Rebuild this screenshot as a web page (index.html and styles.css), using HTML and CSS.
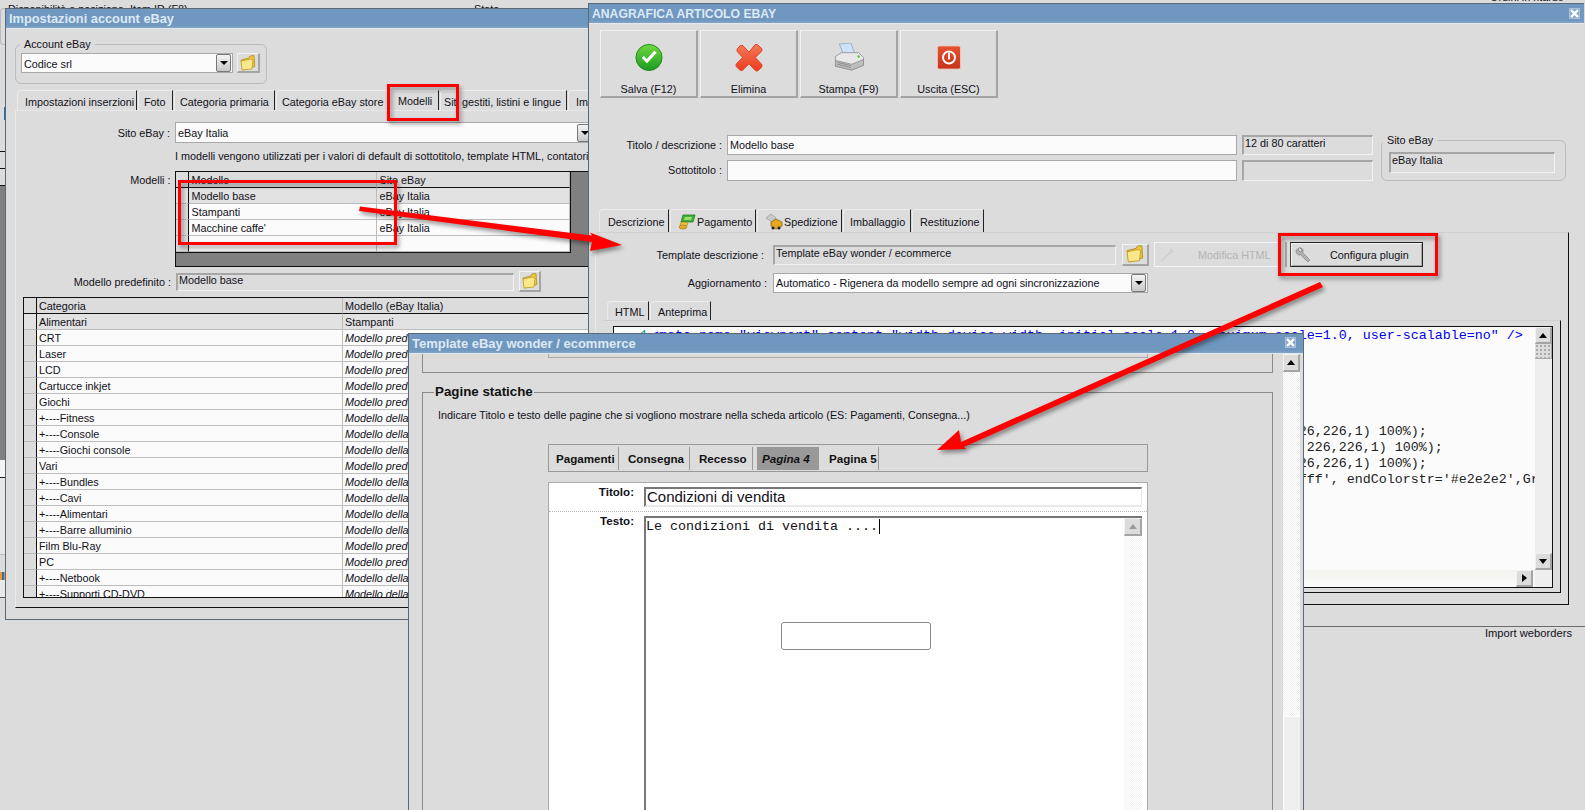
FILE: index.html
```html
<!DOCTYPE html>
<html lang="it">
<head>
<meta charset="utf-8">
<title>Impostazioni account eBay</title>
<link rel="stylesheet" href="styles.css">
</head>
<body>
<div class="page">

  <!-- application behind the windows -->
  <div class="behind-top"><span class="bt-a">Disponibilità e posizione</span><span class="bt-b">Item ID (F8)</span><span class="bt-c">Stato</span></div>
  <div class="behind-right">Ordini in ritardo</div>
  <div class="behind-left">
    <div class="bl bl-a"></div>
    <div class="bl bl-b"></div>
    <div class="bl bl-c"></div>
    <div class="bl bl-d"></div>
    <div class="bl bl-e"></div>
    <div class="bl bl-f"></div>
    <div class="bl bl-g"></div>
    <div class="bl bl-h"></div>
    <div class="bl bl-i"></div>
    <div class="bl bl-j"></div>
  </div>
  <div class="statusbar">Import weborders</div>

  <!-- Window 1 -->
  <section class="win win1">
    <header class="title">Impostazioni account eBay</header>
    <div class="win1-body">
      <fieldset class="group group-account">
        <legend>Account eBay</legend>
        <div class="row-tight">
          <div class="select sel-account"><span>Codice srl</span><i class="drop"></i></div>
          <button class="folder fb-account"><svg width="16" height="16" viewBox="0 0 16 16"><use href="#ico-folder"/></svg></button>
        </div>
      </fieldset>
      <nav class="tabs tabs1">
        <span class="tab t1a">Impostazioni inserzioni</span>
        <span class="tab t1b">Foto</span>
        <span class="tab t1c">Categoria primaria</span>
        <span class="tab t1d">Categoria eBay store</span>
        <span class="tab on t1e">Modelli</span>
        <span class="tab t1f">Siti gestiti, listini e lingue</span>
        <span class="tab t1g">Importazione</span>
      </nav>
      <div class="panel1">
        <div class="frow fr-site">
          <label class="lab">Sito eBay :</label>
          <div class="select sel-site"><span>eBay Italia</span><i class="drop"></i></div>
        </div>
        <p class="info">I modelli vengono utilizzati per i valori di default di sottotitolo, template HTML, contatori e altri parametri</p>
        <div class="frow fr-models">
          <label class="lab lab-top">Modelli :</label>
          <div class="gridbox models">
            <table class="tbl tbl-models">
              <tr class="head"><td class="ind"></td><td class="c-m">Modello</td><td>Sito eBay</td></tr>
              <tr class="cur"><td class="ind"></td><td>Modello base</td><td>eBay Italia</td></tr>
              <tr><td class="ind"></td><td>Stampanti</td><td>eBay Italia</td></tr>
              <tr><td class="ind"></td><td>Macchine caffe'</td><td>eBay Italia</td></tr>
              <tr><td class="ind"></td><td></td><td></td></tr>
            </table>
          </div>
        </div>
        <div class="frow fr-pred">
          <label class="lab">Modello predefinito :</label>
          <div class="ro ro-pred">Modello base</div>
          <button class="folder fb-pred"><svg width="16" height="16" viewBox="0 0 16 16"><use href="#ico-folder"/></svg></button>
        </div>
        <div class="gridbox cats">
          <table class="tbl tbl-cats">
            <tr class="head"><td class="ind"></td><td class="c-c">Categoria</td><td>Modello (eBay Italia)</td></tr>
            <tr class="cur"><td class="ind"></td><td>Alimentari</td><td>Stampanti</td></tr>
            <tr><td class="ind"></td><td>CRT</td><td class="it">Modello predefinito</td></tr>
            <tr><td class="ind"></td><td>Laser</td><td class="it">Modello predefinito</td></tr>
            <tr><td class="ind"></td><td>LCD</td><td class="it">Modello predefinito</td></tr>
            <tr><td class="ind"></td><td>Cartucce inkjet</td><td class="it">Modello predefinito</td></tr>
            <tr><td class="ind"></td><td>Giochi</td><td class="it">Modello predefinito</td></tr>
            <tr><td class="ind"></td><td>+----Fitness</td><td class="it">Modello della categoria</td></tr>
            <tr><td class="ind"></td><td>+----Console</td><td class="it">Modello della categoria</td></tr>
            <tr><td class="ind"></td><td>+----Giochi console</td><td class="it">Modello della categoria</td></tr>
            <tr><td class="ind"></td><td>Vari</td><td class="it">Modello predefinito</td></tr>
            <tr><td class="ind"></td><td>+----Bundles</td><td class="it">Modello della categoria</td></tr>
            <tr><td class="ind"></td><td>+----Cavi</td><td class="it">Modello della categoria</td></tr>
            <tr><td class="ind"></td><td>+----Alimentari</td><td class="it">Modello della categoria</td></tr>
            <tr><td class="ind"></td><td>+----Barre alluminio</td><td class="it">Modello della categoria</td></tr>
            <tr><td class="ind"></td><td>Film Blu-Ray</td><td class="it">Modello predefinito</td></tr>
            <tr><td class="ind"></td><td>PC</td><td class="it">Modello predefinito</td></tr>
            <tr><td class="ind"></td><td>+----Netbook</td><td class="it">Modello della categoria</td></tr>
            <tr><td class="ind"></td><td>+----Supporti CD-DVD</td><td class="it">Modello della categoria</td></tr>
          </table>
        </div>
      </div>
    </div>
  </section>

  <!-- Window 2 -->
  <section class="win win2">
    <header class="title">ANAGRAFICA ARTICOLO EBAY<span class="close"><svg width="9" height="9" viewBox="0 0 9 9"><path d="M1 1l7 7M8 1l-7 7" stroke="#fff" stroke-width="2.4" fill="none"/></svg></span></header>
    <div class="win2-body">
      <div class="toolbar">
        <button class="tbtn">
          <svg width="30" height="30" viewBox="0 0 30 30"><circle cx="15" cy="15" r="13.5" fill="url(#g-green)" stroke="#1f8a1a"/><path d="M7.5 15.5l5.5 5.5 10-11-2.6-2-7.6 8.6-3.2-3.2z" fill="#fff"/></svg>
          <span>Salva (F12)</span>
        </button>
        <button class="tbtn">
          <svg width="30" height="30" viewBox="0 0 30 30"><path d="M6 2.500Q8 2 9 3l6 6.500L21 2q1-1 3 0l4 3.500q1 1.500 0 3L21.500 15l6.500 7q1 1.500 0 3l-3.500 3.500q-1.500 1-3 0L15 21.500 8.500 28q-1.500 1-3 0L2 24.500q-1-1.500 0-3L8.500 15 3 9q-1-1.500 0-3z" fill="url(#g-red)" stroke="#d8401f" stroke-linejoin="round"/></svg>
          <span>Elimina</span>
        </button>
        <button class="tbtn">
          <svg width="32" height="30" viewBox="0 0 32 30"><path d="M6 1l12-1 4 11H10z" fill="#cfe3f7" stroke="#8aa3bd" stroke-width=".8"/><path d="M2 14l6-4h18l5 5v8l-12 5-17-4z" fill="#e8e8e8" stroke="#9a9a9a"/><path d="M2 18l17 4 12-5v6l-12 5-17-4z" fill="#bdbdbd" stroke="#8c8c8c" stroke-width=".8"/><path d="M4 20l14 3.4M4 22l14 3.4" stroke="#777" stroke-width=".7"/><circle cx="26" cy="14" r="1.3" fill="#5cc04a"/></svg>
          <span>Stampa (F9)</span>
        </button>
        <button class="tbtn">
          <svg width="30" height="30" viewBox="0 0 30 30"><rect x="3" y="3" width="24" height="24" rx="2" fill="url(#g-pow)" stroke="#f0c9bf"/><circle cx="15" cy="15" r="6.2" fill="none" stroke="#fff" stroke-width="2"/><rect x="14" y="10" width="2" height="7" fill="#fff"/></svg>
          <span>Uscita (ESC)</span>
        </button>
      </div>
      <div class="form2">
        <label class="lab">Titolo / descrizione :</label>
        <div class="inp">Modello base</div>
        <div class="ro">12 di 80 caratteri</div>
        <fieldset class="group group-site">
          <legend>Sito eBay</legend>
          <div class="ro ro-site">eBay Italia</div>
        </fieldset>
        <label class="lab">Sottotitolo :</label>
        <div class="inp"></div>
        <div class="ro"></div>
      </div>
      <nav class="tabs tabs2">
        <span class="tab on t2a">Descrizione</span>
        <span class="tab t2b"><svg class="tico" width="18" height="18" viewBox="0 0 18 18"><use href="#ico-pay"/></svg>Pagamento</span>
        <span class="tab t2c"><svg class="tico" width="18" height="18" viewBox="0 0 18 18"><use href="#ico-ship"/></svg>Spedizione</span>
        <span class="tab t2d">Imballaggio</span>
        <span class="tab t2e">Restituzione</span>
      </nav>
      <div class="panel2">
        <div class="frow fr-tpl">
          <label class="lab lab-tpl">Template descrizione :</label>
          <div class="ro ro-tpl">Template eBay wonder / ecommerce</div>
          <button class="folder fb-tpl"><svg width="18" height="18" viewBox="0 0 16 16"><use href="#ico-folder"/></svg></button>
          <button class="cbtn dis"><svg width="16" height="16" viewBox="0 0 16 16"><path d="M2 14L13 4M11 2l3 3" stroke="#cfcfcf" stroke-width="1.6" fill="none"/></svg><span>Modifica HTML</span></button>
          <span class="sep"></span>
          <button class="cbtn act"><svg width="16" height="16" viewBox="0 0 16 16"><path d="M1 3.500L3.500 1.200 3.800 4l1.400 1L7 4.300l-.4-1.800-2-1.800C6 .6 7.800 1.600 8 3.500c.2 1 0 1.600-.3 2.200l6.300 6.300c.6.700.6 1.500 0 2.100s-1.500.6-2.100 0L5.700 7.800C4.800 8.200 3.500 8 2.500 7.200 1.500 6.300.9 4.900 1 3.500z" fill="#b4b4b4" stroke="#7a7a7a" stroke-width=".7"/></svg><span>Configura plugin</span></button>
        </div>
        <div class="frow fr-upd">
          <label class="lab">Aggiornamento :</label>
          <div class="select sel-upd"><span>Automatico - Rigenera da modello sempre ad ogni sincronizzazione</span><i class="drop"></i></div>
        </div>
        <nav class="tabs tabs3">
          <span class="tab on t3a">HTML</span>
          <span class="tab t3b">Anteprima</span>
        </nav>
        <div class="panel3">
          <div class="editor">
            <div class="ed-main">
              <pre class="code"><span class="gutter">1</span><span class="blue">&lt;meta name="viewport" content="width=device-width, initial-scale=1.0, maximum-scale=1.0, user-scalable=no" /&gt;</span>
&lt;style type="text/css"&gt;
.header {
    width: 100%;
    height: 60px;
    background: #ffffff;
         background: -moz-linear-gradient(top, rgba(255,255,255,1) 0%, rgba(226,226,226,1) 100%);
           background: -moz-linear-gradient(top, rgba(255,255,255,1) 0%, rgba(226,226,226,1) 100%);
         background: -moz-linear-gradient(top, rgba(255,255,255,1) 0%, rgba(226,226,226,1) 100%);
          filter: progid:DXImageTransform.Microsoft.gradient( startColorstr='#ffffff', endColorstr='#e2e2e2',GradientType=0 );
}</pre>
              <div class="hscroll"><button class="sb sb-right"><i class="tri tri-r"></i></button></div>
            </div>
            <div class="vscroll">
              <button class="sb"><i class="tri tri-u"></i></button>
              <div class="vthumb"></div>
              <div class="vtrack"></div>
              <button class="sb"><i class="tri tri-d"></i></button>
            </div>
          </div>
        </div>
      </div>
    </div>
  </section>

  <!-- Window 3 -->
  <section class="win win3">
    <header class="title">Template eBay wonder / ecommerce<span class="close"><svg width="9" height="9" viewBox="0 0 9 9"><path d="M1 1l7 7M8 1l-7 7" stroke="#fff" stroke-width="2.4" fill="none"/></svg></span></header>
    <div class="win3-body">
      <div class="w3-main">
        <div class="frag"><div class="frag-inner"></div></div>
        <fieldset class="static">
          <legend>Pagine statiche</legend>
          <p class="hint">Indicare Titolo e testo delle pagine che si vogliono mostrare nella scheda articolo (ES: Pagamenti, Consegna...)</p>
          <div class="pagetabs">
            <span class="ptab pt-a">Pagamenti</span>
            <span class="ptab pt-b">Consegna</span>
            <span class="ptab pt-c">Recesso</span>
            <span class="ptab pt-d on">Pagina 4</span>
            <span class="ptab pt-e">Pagina 5</span>
          </div>
          <div class="whitepanel">
            <div class="wrow wrow-a">
              <label class="wlab">Titolo:</label>
              <div class="winp">Condizioni di vendita</div>
            </div>
            <div class="wrow wrow-b">
              <label class="wlab">Testo:</label>
              <div class="wtext">
                <div class="wtext-body">Le condizioni di vendita ....<span class="caret"></span></div>
                <div class="wscroll"><button class="sb sb-light"><i class="tri tri-u tri-g"></i></button></div>
                <div class="floatbox"></div>
              </div>
            </div>
          </div>
        </fieldset>
      </div>
      <div class="w3-scroll">
        <button class="sb sb-w3"><i class="tri tri-u"></i></button>
        <div class="w3-track"></div>
        <div class="w3-thumb"></div>
      </div>
    </div>
  </section>

  <!-- Annotations drawn over the screenshot -->
  <svg class="marks" width="1585" height="810" viewBox="0 0 1585 810">
    <rect x="388.5" y="85.5" width="69" height="34" fill="none" stroke="#f00" stroke-width="3"/>
    <rect x="179.5" y="181.5" width="216" height="62" fill="none" stroke="#f00" stroke-width="3"/>
    <rect x="1279.5" y="234.5" width="157" height="40" fill="none" stroke="#f00" stroke-width="3"/>
    <path d="M360 206.500L592 235.500L590 232.500L622 245L590 251L592 242L359 211z" fill="#f00"/>
    <path d="M1320 282L1323 287L964 447L966 449L937 450L959 430L961 442z" fill="#f00"/>
  </svg>

  <!-- shared icons -->
  <svg class="defs" width="0" height="0">
    <defs>
      <linearGradient id="g-green" x1="0" y1="0" x2="0" y2="1"><stop offset="0" stop-color="#6fd83f"/><stop offset="1" stop-color="#1b9a22"/></linearGradient>
      <linearGradient id="g-red" x1="0" y1="0" x2="0" y2="1"><stop offset="0" stop-color="#f47a55"/><stop offset="1" stop-color="#ee3a1f"/></linearGradient>
      <linearGradient id="g-pow" x1="0" y1="0" x2="0" y2="1"><stop offset="0" stop-color="#e8522e"/><stop offset="1" stop-color="#c5331a"/></linearGradient>
      <symbol id="ico-folder" viewBox="0 0 16 16">
        <path d="M1 5l8-2 1-2 4-.5.8 11-12 3.500z" fill="#f0c838" stroke="#b08a20" stroke-width=".8"/>
        <path d="M1 6l10-2 2 1-1 9-10 1z" fill="#fbe88a" stroke="#c29a24" stroke-width=".8"/>
      </symbol>
      <symbol id="ico-pay" viewBox="0 0 18 18">
        <path d="M5 2h12l-2 7H3z" fill="#3fae3a" stroke="#1f7a24" stroke-width=".8"/>
        <path d="M7 4h7l-1 3H6z" fill="#9be06a"/>
        <ellipse cx="6" cy="11" rx="4" ry="2" fill="#f1c644" stroke="#a57f12" stroke-width=".7"/>
        <ellipse cx="5" cy="14" rx="4" ry="2" fill="#e4ae2c" stroke="#a57f12" stroke-width=".7"/>
      </symbol>
      <symbol id="ico-ship" viewBox="0 0 18 18">
        <path d="M1 5l5-4 5 4-4 4z" fill="#c9c9c9" stroke="#9a9a9a" stroke-width=".7"/>
        <path d="M6 9l5-3 6 3v4l-6 3-5-3z" fill="#e8a81e" stroke="#7a5a10" stroke-width=".7"/>
        <circle cx="8" cy="15" r="1.500" fill="#222"/><circle cx="14" cy="15" r="1.500" fill="#222"/>
      </symbol>
    </defs>
  </svg>
</div>
</body>
</html>
```

FILE: styles.css
```css
* { box-sizing: border-box; }
html, body { margin: 0; padding: 0; height: 100%; overflow: hidden; }
body { background: #dcdcdc; font: 10.8px/14px "Liberation Sans", Arial, sans-serif; color: #101018; }
.page { position: relative; width: 1585px; height: 810px; overflow: hidden; background: #dcdcdc; }
.defs { position: absolute; }
button { font: inherit; color: inherit; padding: 0; margin: 0; }
p { margin: 0; }

/* behind the windows */
.behind-top { position: absolute; left: 8px; top: 0; width: 560px; height: 8px; overflow: hidden; display: flex; padding-top: 2px; }
.bt-a { width: 122px; white-space: nowrap; overflow: hidden; }
.bt-b { width: 344px; white-space: nowrap; }
.behind-right { position: absolute; left: 1490px; top: -10px; width: 90px; white-space: nowrap; height: 13px; overflow: hidden; }
.behind-left { position: absolute; left: 0; top: 8px; width: 5px; display: flex; flex-direction: column; }
.bl-a { height: 37px; border: 1px solid #bbb; border-right: 0; border-radius: 4px 0 0 4px; }
.bl-b { height: 106px; background: linear-gradient(#1c6fb5, #1c6fb5) 4px 62px / 1px 13px no-repeat; }
.bl-c { height: 17px; border-top: 1px solid #111; }
.bl-d { height: 17px; border-top: 1px solid #111; }
.bl-e { height: 275px; background: #808080; border-top: 1px solid #111; }
.bl-f { height: 18px; background: #f4f4f4; border-bottom: 1px solid #222; }
.bl-g { height: 77px; border-bottom: 1px solid #bbb; background: #e6e6e6; }
.bl-h { height: 17px; }
.bl-i { height: 8px; background: linear-gradient(90deg, #e79b2c 0 2px, #2b6fb0 2px 4px, #e79b2c 4px); }
.bl-j { height: 18px; border-bottom: 1px solid #555; background: #e8e8e8; }
.statusbar { position: absolute; left: 1000px; right: 0; top: 626px; height: 14px; border-top: 1px solid #6b6b6b; text-align: right; padding: 0 13px 0 0; line-height: 12px; font-size: 11.2px; }

/* window chrome */
.win { position: absolute; background: #dcdcdc; border: 1px solid #5a6a78; overflow: hidden; }
.win1 { left: 5px; top: 8px; width: 590px; height: 612px; }
.win2 { left: 588px; top: 3px; width: 996px; height: 620px; border-width: 1px 0 0 1px; }
.win3 { left: 408px; top: 333px; width: 896px; height: 490px; }
.title { height: 20px; line-height: 20px; padding-left: 3px; font-weight: bold; font-size: 12.8px; color: #dde9f5; background: linear-gradient(#6f97c0, #7097be 85%, #82a5c9); position: relative; white-space: nowrap; border-bottom: 1px solid #e4e9ee; }
.win2 .title { font-size: 12.2px; }
.win3 .title { font-size: 13px; }
.close { position: absolute; right: 4px; top: 4px; width: 11px; height: 11px; background: #8cabcb; border: 1px solid #a9c0d8; display: flex; align-items: center; justify-content: center; }
.win3 .close { right: 7px; top: 3px; }
.close svg { display: block; }

/* common controls */
.lab { text-align: right; white-space: nowrap; display: block; }
.select, .inp { background: #fbfbfb; border: 1px solid #a8a8a8; display: flex; align-items: center; padding-left: 2px; position: relative; white-space: nowrap; overflow: hidden; }
.select span { flex: 1; overflow: hidden; }
.drop { width: 15px; height: 18px; border: 1px solid #777; border-radius: 2px; background: linear-gradient(#f4f4f4, #c8c8c8); position: relative; margin-right: 1px; flex: none; }
.drop::after { content: ""; position: absolute; left: 3px; top: 6px; border: 4px solid transparent; border-top: 4px solid #000; border-bottom: 0; }
.ro { background: #dcdcdc; border: 1px solid #f2f2f2; border-top: 2px solid #a6a6a6; border-left: 2px solid #a6a6a6; white-space: nowrap; overflow: hidden; padding: 0 0 0 1px; line-height: 12px; }
.folder, .tbtn, .cbtn, .sb { background: #dcdcdc; border: 1px solid #f2f2f2; border-right: 2px solid #a4a4a4; border-bottom: 2px solid #a4a4a4; }
.folder { display: flex; align-items: center; justify-content: center; flex: none; }
.group { border: 1px solid #bcbcbc; border-radius: 6px; margin: 0; min-width: 0; }
.group legend { padding: 0 4px; line-height: 14px; white-space: nowrap; }
.row-tight { display: flex; gap: 4px; }

/* tabs */
.tabs { display: flex; height: 20px; }
.tab { display: flex; align-items: center; padding: 2px 0 0 8px; white-space: nowrap; overflow: hidden; border-top: 1px solid #ececec; border-left: 1px solid #ececec; border-right: 1px solid #222; border-radius: 4px 0 0 0; margin-right: 1px; flex: none; }
.tab.on { padding-top: 1px; }

/* window 1 */
.win1-body { padding: 8px 0 0 0; }
.group-account { margin-left: 9px; width: 252px; padding: 2px 5px 10px; }
.group-account legend { margin-left: -1px; }
.sel-account { width: 212px; height: 20px; }
.sel-account span { padding-top: 1px; }
.fb-account { width: 23px; height: 20px; }
.tabs1 { margin: 6px 0 0 11px; }
.t1a { width: 120px; padding-left: 7px; }
.t1b { width: 35px; padding-left: 5px; }
.t1c { width: 101px; padding-left: 5px; }
.t1d { width: 112px; padding-left: 5px; }
.t1e { width: 50px; padding-left: 8px; }
.t1f { width: 127px; padding-left: 3px; }
.t1g { width: 80px; padding-left: 7px; }
.panel1 { margin-left: 9px; height: 498px; border-top: 1px solid #e8e8e8; border-left: 1px solid #e8e8e8; border-bottom: 1px solid #111; }
.frow { display: flex; align-items: center; }
.panel1 .lab { width: 155px; margin-right: 5px; }
.fr-site { margin-top: 11px; }
.sel-site { width: 422px; height: 21px; }
.info { margin: 6px 0 0 159px; white-space: nowrap; }
.fr-models { margin-top: 8px; align-items: flex-start; }
.panel1 .lab-top { padding-top: 2px; }
.gridbox { border: 1px solid #111; overflow: hidden; }
.models { width: 420px; height: 96px; background: #808080; }
.tbl { border-collapse: separate; border-spacing: 0; table-layout: fixed; }
.tbl td { height: 16px; padding: 0 0 0 2px; border-bottom: 1px solid #bcbcbc; border-right: 1px solid #bcbcbc; background: #fbfbfb; white-space: nowrap; overflow: hidden; line-height: 14px; }
.tbl .ind { width: 13px; background: #dcdcdc; border-right: 1px solid #111; padding: 0; }
.tbl .head td { background: #dcdcdc; border-bottom: 1px solid #111; }
.tbl .cur td { background: #e2e2e2; }
.tbl-models { width: 395px; border-right: 1px solid #111; border-bottom: 1px solid #111; }
.c-m { width: 188px; }
.fr-pred { margin-top: 4px; }
.ro-pred { width: 338px; height: 18px; line-height: 10px; }
.fb-pred { width: 22px; height: 21px; margin-left: 5px; }
.cats { margin: 5px 0 0 7px; height: 301px; border-right: 0; width: 580px; }
.tbl-cats { width: 620px; }
.c-c { width: 306px; }
.it { font-style: italic; }

/* window 2 */
.win2-body { padding-top: 6px; }
.toolbar { display: flex; gap: 2px; padding-left: 11px; }
.tbtn { width: 98px; height: 68px; display: flex; flex-direction: column; align-items: center; padding-top: 12px; gap: 10px; }
.tbtn svg { display: block; }
.form2 { display: grid; grid-template-columns: 133px 510px 131px 188px; grid-template-rows: 20px 21px; gap: 5px; margin-top: 37px; align-items: stretch; }
.form2 .lab { line-height: 20px; }
.group-site { grid-row: 1 / span 2; grid-column: 4; margin: -2px 0 0 3px; padding: 5px 10px 7px 7px; align-self: start; height: 48px; }
.group-site legend { margin-left: -6px; }
.ro-site { height: 21px; }
.tabs2 { margin: 28px 0 0 10px; height: 23px; }
.tab .tico { margin-right: 1px; flex: none; }
.t2a { width: 70px; }
.t2b { width: 86px; padding-left: 7px; }
.t2c { width: 85px; padding-left: 7px; }
.t2d { width: 68px; padding-left: 6px; }
.t2e { width: 72px; padding-left: 7px; }
.panel2 { margin-left: 6px; width: 974px; height: 373px; border-top: 1px solid #cfcfcf; border-left: 1px solid #e8e8e8; border-right: 1px solid #111; border-bottom: 1px solid #111; }
.fr-tpl { margin-top: 9px; height: 25px; }
.panel2 .lab { width: 171px; margin-right: 6px; }
.panel2 .lab-tpl { padding-right: 3px; }
.ro-tpl { width: 343px; height: 20px; }
.fb-tpl { width: 27px; height: 22px; margin-left: 6px; }
.cbtn { display: flex; align-items: center; height: 25px; padding-left: 4px; flex: none; }
.cbtn.dis { width: 124px; margin-left: 5px; color: #b4b4b4; border: 1px solid #f4f4f4; border-right: 0; }
.cbtn.dis span { margin-left: 23px; }
.sep { width: 2px; height: 25px; background: #a6a6a6; margin: 0 3px 0 7px; flex: none; }
.cbtn.act { width: 133px; border: 1px solid #222; border-left: 1px solid #444; background: #dcdcdc; box-shadow: inset 1px 1px 0 #f4f4f4, inset -1px -1px 0 #a8a8a8; }
.cbtn.act span { margin-left: 19px; }
.fr-upd { margin-top: 6px; }
.sel-upd { width: 375px; height: 20px; }
.tabs3 { margin: 8px 0 0 11px; height: 19px; }
.t3a { width: 42px; padding-left: 7px; }
.t3b { width: 61px; padding-left: 7px; }
.panel3 { margin-left: 7px; width: 958px; height: 273px; padding: 5px 0 0 10px; border-top: 1px solid #cfcfcf; border-right: 1px solid #111; border-bottom: 1px solid #111; }
.editor { width: 940px; height: 262px; border: 1px solid #111; background: #fbfbfb; display: flex; }
.ed-main { flex: 1; min-width: 0; display: flex; flex-direction: column; }
.code { flex: 1; margin: 0; padding: 1px 0 0 37px; overflow: hidden; font: 13.33px/16px "Liberation Mono", "Courier New", monospace; color: #222; white-space: pre; }
.gutter { display: inline-block; width: 11px; margin-left: -11px; color: #1a9a8a; }
.blue { color: #0000ee; }
.hscroll { height: 17px; display: flex; justify-content: flex-end; background: linear-gradient(#f2f2ee, #fbfbfb); padding-right: 2px; }
.sb { display: flex; align-items: center; justify-content: center; flex: none; width: 17px; height: 17px; }
.tri { display: block; width: 0; height: 0; border: 4px solid transparent; }
.tri-u { border-top: 0; border-bottom: 5px solid #000; }
.tri-d { border-bottom: 0; border-top: 5px solid #000; }
.tri-r { border-right: 0; border-left: 5px solid #000; }
.tri-g { border-bottom-color: #9a9a9a; }
.vscroll { width: 17px; display: flex; flex-direction: column; background: #eee; padding-bottom: 17px; }
.vthumb { height: 15px; background: radial-gradient(circle, #aaa 1px, transparent 1.2px) 0 0 / 4px 4px #dcdcdc; border-bottom: 1px solid #aaa; border-right: 1px solid #aaa; }
.vtrack { flex: 1; background: #eeeeee; }

/* window 3 */
.win3-body { display: flex; height: 470px; }
.w3-main { width: 874px; flex: none; }
.frag { margin-left: 13px; width: 851px; height: 19px; border: 1px solid #8a8a8a; border-top: 0; }
.frag-inner { margin-left: 125px; width: 600px; height: 4px; border: 1px solid #aaa; border-top: 0; }
.static { margin: 11px 0 0 13px; width: 851px; padding: 8px 0 0 15px; border: 1px solid #8a8a8a; height: 500px; min-width: 0; }
.static legend { font: bold 13.33px/16px "Liberation Sans", Arial, sans-serif; padding: 0 1px; margin-left: -4px; color: #111; }
.hint { font-size: 10.8px; white-space: nowrap; }
.pagetabs { display: flex; margin: 22px 0 0 110px; width: 600px; height: 28px; border: 1px solid #999; padding: 2px 0; font: bold 11.6px/24px "Liberation Sans", Arial, sans-serif; color: #111; }
.ptab { border-right: 1px solid #999; white-space: nowrap; height: 23px; }
.pt-a { width: 70px; padding-left: 7px; }
.pt-b { width: 71px; padding-left: 9px; }
.pt-c { width: 63px; padding-left: 9px; }
.pt-d { width: 62px; margin-left: 4px; padding-left: 5px; background: #999; font-style: italic; border-right: 0; }
.pt-e { width: 60px; padding-left: 10px; }
.whitepanel { margin: 10px 0 0 110px; width: 600px; height: 400px; background: #fff; border: 1px solid #aaa; border-bottom: 0; }
.wrow { display: flex; gap: 10px; }
.wlab { width: 85px; margin-top: -2px; text-align: right; font: bold 11.6px/14px "Liberation Sans", Arial, sans-serif; flex: none; }
.wrow-a { height: 29px; padding-top: 4px; border-bottom: 1px dotted #bbb; }
.winp { width: 498px; height: 20px; border: 2px solid #777; border-right: 1px solid #e8e8e8; border-bottom: 2px solid #e8e8e8; font-size: 15px; line-height: 16px; padding-left: 1px; }
.wrow-b { padding-top: 4px; }
.wtext { position: relative; width: 498px; height: 340px; border-top: 2px solid #777; border-left: 2px solid #777; display: flex; }
.wtext-body { flex: 1; font: 13.33px/16px "Liberation Mono", "Courier New", monospace; padding: 1px 0 0 0; }
.caret { display: inline-block; width: 1px; height: 15px; background: #000; vertical-align: text-bottom; margin-left: 1px; }
.wscroll { width: 18px; background: repeating-conic-gradient(#f3f3f3 0 25%, #fff 0 50%) 0 0 / 2px 2px; }
.sb-light { width: 18px; height: 18px; }
.floatbox { position: absolute; left: 135px; top: 104px; width: 150px; height: 28px; border: 1px solid #888; border-radius: 3px; background: #fff; }
.w3-scroll { width: 17px; margin-top: 0; display: flex; flex-direction: column; background: repeating-conic-gradient(#f0f0f0 0 25%, #fff 0 50%) 0 0 / 2px 2px; }
.sb-w3 { height: 18px; }
.w3-track { height: 344px; }
.w3-thumb { flex: 1; background: #efefef; border-top: 1px solid #fff; border-left: 1px solid #fff; }

/* annotations */
.marks { position: absolute; left: 0; top: 0; pointer-events: none; filter: drop-shadow(2px 3px 2px rgba(0,0,0,.4)); }
```
